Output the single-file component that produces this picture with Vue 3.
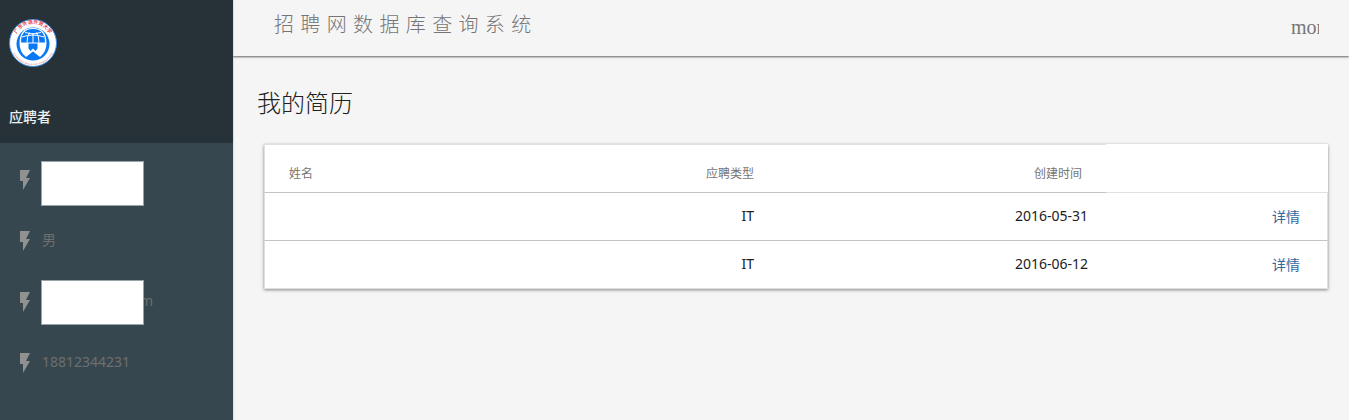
<script setup>
const profile = [
  { text: '', masked: true, mask: 'mask-low' },
  { text: '男', masked: false },
  { text: 'm', masked: true, mask: 'mask-mid' },
  { text: '18812344231', masked: false },
]
const resumes = [
  { name: '', type: 'IT', date: '2016-05-31' },
  { name: '', type: 'IT', date: '2016-06-12' },
]
</script>

<template>
  <div class="layout">
    <aside class="drawer">
      <header class="drawer-head">
        <svg class="logo" viewBox="0 0 48 48" role="img" aria-label="广东外语外贸大学">
          <defs>
            <path id="arc-top" d="M6.5 27 A18 18 0 1 1 41.5 27" />
            <path id="arc-bottom" d="M2.6 18 A22.2 22.2 0 1 0 45.4 18" />
          </defs>
          <circle cx="24" cy="24" r="23.5" fill="#fff" stroke="#3d8fe8" stroke-width="1" />
          <circle cx="24" cy="25" r="16.5" fill="#0878f5" />
          <path d="M10.500 24q0-15 13.500-15t13.500 15q0 9-6.500 14l-7-5.500-7 5.500q-6.500-5-6.500-14z" fill="#fff" />
          <path d="M12 23.500q0-13.500 12-13.500t12 13.500z" fill="#0878f5" />
          <path d="M13 18q11-4 22 0M16 13.500q8 3 16 0M24 14v10M18 23.500q0-6 2.500-10M30 23.500q0-6-2.500-10" fill="none" stroke="#fff" stroke-width="1" />
          <path d="M19.500 24.500h9v5l-2 2.500-2.500-2.500-2.500 2.500-2-2.500z" fill="#0878f5" />
          <text class="seal-cn"><textPath href="#arc-top" startOffset="50%" text-anchor="middle">广东外语外贸大学</textPath></text>
          <text class="seal-en"><textPath href="#arc-bottom" startOffset="50%" text-anchor="middle">GUANGDONG UNIVERSITY OF FOREIGN STUDIES</textPath></text>
        </svg>
        <span class="role">应聘者</span>
      </header>
      <ul class="profile">
        <li v-for="(item, i) in profile" :key="i">
          <svg class="bolt" viewBox="0 0 24 24" aria-hidden="true"><path d="M7 2v11h3v9l7-12h-4l4-8z" /></svg>
          <span class="value" :class="{ trailing: item.masked }">{{ item.text }}</span>
          <span v-if="item.masked" class="mask" :class="item.mask"></span>
        </li>
      </ul>
    </aside>

    <div class="page">
      <header class="topbar">
        <span class="title">招 聘 网 数 据 库 查 询 系 统</span>
        <button class="more" type="button">more_vert</button>
      </header>
      <main>
        <h1>我的简历</h1>
        <table>
          <colgroup>
            <col class="c-name" /><col class="c-type" /><col class="c-date" /><col class="c-action" />
          </colgroup>
          <thead>
            <tr><th class="left">姓名</th><th class="type">应聘类型</th><th>创建时间</th><td class="blank"></td></tr>
          </thead>
          <tbody>
            <tr v-for="r in resumes" :key="r.date">
              <td class="left">{{ r.name }}</td>
              <td>{{ r.type }}</td>
              <td>{{ r.date }}</td>
              <td class="action"><a href="#">详情</a></td>
            </tr>
          </tbody>
        </table>
      </main>
    </div>
  </div>
</template>

<style>
body {
  background: #f5f5f5;
}
</style>

<style scoped>
.layout {
  display: flex;
  min-height: 100vh;
  font-family: "Noto Sans", "Noto Sans CJK SC", sans-serif;
  font-size: 14px;
  background: #f5f5f5;
}
.drawer {
  flex: 0 0 233px;
  background: #37474f;
  box-shadow: 0 0 2px rgba(0, 0, 0, 0.25);
  z-index: 1;
}
.drawer-head {
  box-sizing: border-box;
  height: 143px;
  padding: 19px 9px 16px;
  display: flex;
  flex-direction: column;
  justify-content: space-between;
  background: #263238;
}
.logo {
  width: 48px;
  height: 48px;
}
.seal-cn {
  font: 700 5px "Noto Sans CJK SC", sans-serif;
  fill: #e0474c;
}
.seal-en {
  font: 2px "Liberation Sans", sans-serif;
  fill: #e0474c;
}
.role {
  line-height: 20px;
  font-weight: 500;
  color: #eceff1;
}
.profile {
  list-style: none;
  margin: 0;
  padding: 6px 0 0;
}
.profile li {
  position: relative;
  height: 61px;
  padding-left: 13px;
  display: flex;
  align-items: center;
  color: #6e6e6e;
}
.bolt {
  width: 24px;
  height: 24px;
  margin-right: 5px;
  fill: #919191;
}
.value {
  padding-bottom: 2px;
  line-height: 20px;
}
.trailing {
  margin-left: 98px;
}
.mask {
  position: absolute;
  left: 41px;
  width: 101px;
  height: 43px;
  background: #fff;
  border: 1px solid #9aa3a7;
}
.mask-low {
  top: 12px;
}
.mask-mid {
  top: 9px;
}
.page {
  flex: 1;
  min-width: 0;
}
.topbar {
  box-sizing: border-box;
  height: 56px;
  padding: 8px 30px 0 41px;
  display: flex;
  justify-content: space-between;
  align-items: flex-start;
  color: #757575;
  box-shadow: 0 1px 2px rgba(0, 0, 0, 0.6);
}
.title {
  font-family: "DejaVu Sans", "Noto Sans CJK SC", sans-serif;
  font-size: 20px;
  font-weight: 300;
  line-height: 34px;
  white-space: nowrap;
}
.more {
  width: 28px;
  padding: 0;
  border: 0;
  background: none;
  overflow: hidden;
  text-align: left;
  white-space: nowrap;
  font: 20px/38px "Liberation Serif", serif;
  color: #757575;
}
main {
  padding: 29px 21px 24px 31px;
}
h1 {
  margin: 0 0 23px -7px;
  font-size: 24px;
  line-height: 36px;
  font-weight: 300;
  color: #212121;
}
table {
  width: 100%;
  table-layout: fixed;
  border-collapse: separate;
  border-spacing: 0;
  background: #fff;
  box-shadow: 0 1px 3px rgba(0, 0, 0, 0.45);
}
.c-name {
  width: 234px;
}
.c-date {
  width: 334px;
}
.c-action {
  width: 222px;
}
th,
td {
  box-sizing: border-box;
  height: 48px;
  padding: 0 18px 2px;
  text-align: right;
  border-bottom: 1px solid #c4c4c4;
  color: #212121;
}
th {
  height: 49px;
  padding: 8px 24px 0 18px;
  font-size: 12px;
  font-weight: 400;
  color: #757575;
  border-top: 1px solid #e0e0e0;
}
th.type {
  padding-right: 18px;
}
.left {
  padding-left: 24px;
  text-align: left;
  border-left: 1px solid #e0e0e0;
}
.blank {
  border-bottom-color: #e0e0e0;
}
.action {
  padding-right: 27px;
  border-right: 1px solid #e0e0e0;
}
tbody tr:last-child td {
  border-bottom-color: #e0e0e0;
}
a {
  color: #33689c;
  text-decoration: none;
}
</style>
